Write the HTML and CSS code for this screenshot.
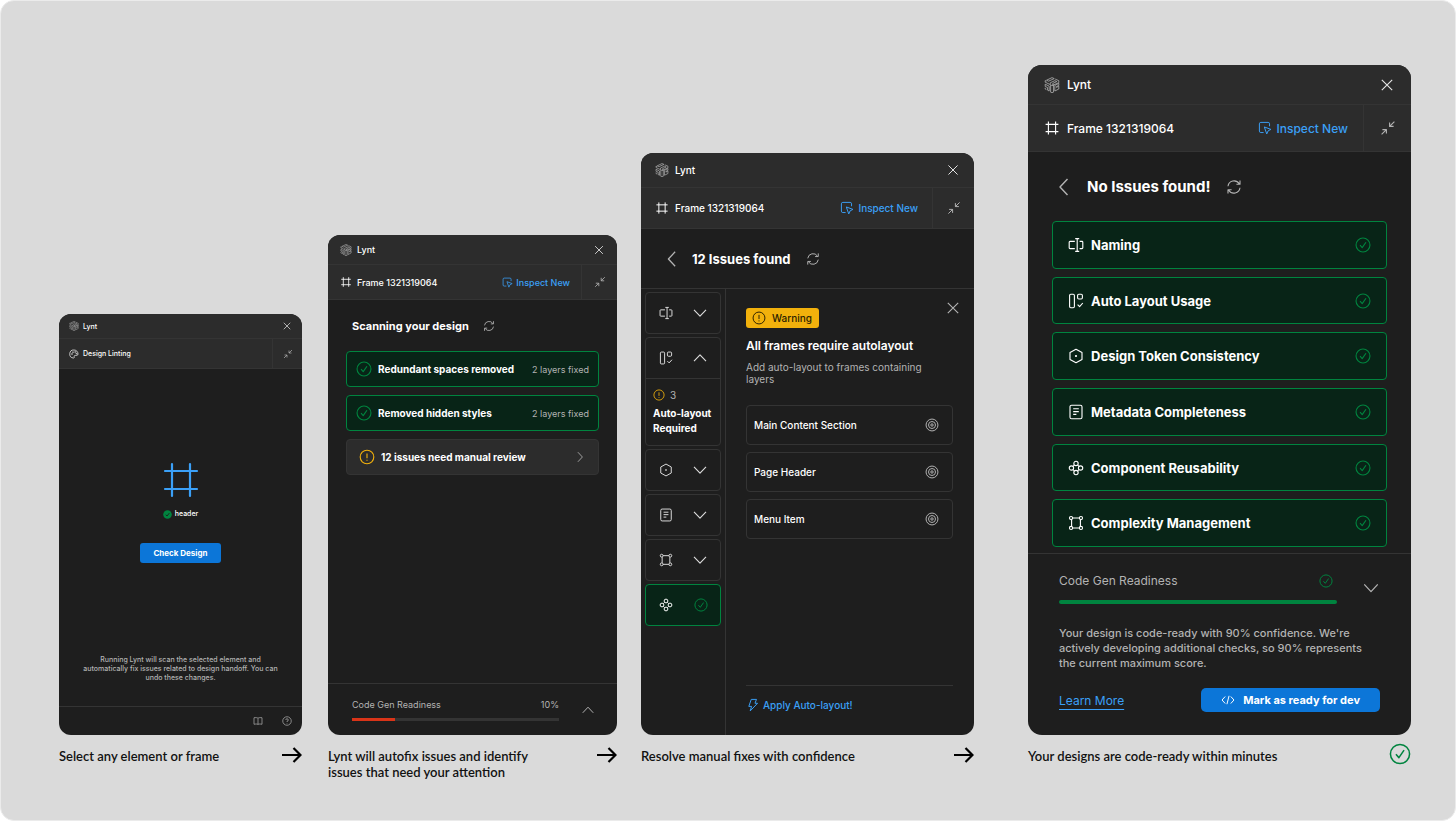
FILE: index.html
```html
<!DOCTYPE html>
<html lang="en">
<head>
<meta charset="utf-8">
<meta name="viewport" content="width=device-width, initial-scale=1">
<title>Lynt</title>
<link rel="stylesheet" href="styles.css">
</head>
<body>
<svg class="sprite" aria-hidden="true">
  <symbol id="i-logo" viewBox="0 0 20 20"><path d="M10 .8 12.800 2 5.800 5.200 3.200 4Z M14 2.600 18.500 4.600V7L11 10.400V8L16 5.700 13.500 4.600 7.800 7.200 7.800 9.500 1.500 6.500V4.500L3 5.200 M1.500 9 6.500 11.500V17.500L4.500 16.500V13.200L1.500 11.800Z M8.300 9.800 10 10.800 11.800 9.800V19L10 19.700 8.300 19Z M13.500 10.500 18.500 8V10.500L15.500 12V13L18.500 11.500V15L13.500 17.500Z M1.500 13.500V15L3 15.800"/></symbol>
  <symbol id="i-x" viewBox="0 0 20 20"><path d="M3.500 3.500 16.500 16.500M16.500 3.500 3.500 16.500"/></symbol>
  <symbol id="i-frame" viewBox="0 0 20 20"><path d="M5.500 2V18M14.500 2V18M2 5.500H18M2 14.500H18"/></symbol>
  <symbol id="i-palette" viewBox="0 0 20 20"><path d="M10 2a8 8 0 1 0-1 16c1.500 0 2-1 1.500-2.300-.6-1.500.2-2.900 2-2.900H15.500c1.700 0 2.500-1.200 2.500-2.800C18 5.300 14.400 2 10 2Z"/><circle cx="6" cy="10" r=".8"/><circle cx="8" cy="6.300" r=".8"/><circle cx="12.300" cy="6" r=".8"/><circle cx="14.800" cy="9.300" r=".8"/></symbol>
  <symbol id="i-collapse" viewBox="0 0 20 20"><path d="M18 2 12 8M12 3V8H17M2 18 8 12M3 12H8V17"/></symbol>
  <symbol id="i-inspect" viewBox="0 0 20 20"><path d="M8 16.500H4A2 2 0 0 1 2 14.500V4A2 2 0 0 1 4 2H14.500A2 2 0 0 1 16.500 4V7.500M9 8.500 18.500 12 14.500 14 12.500 18.500Z"/></symbol>
  <symbol id="i-refresh" viewBox="0 0 20 20"><path d="M2.500 9A7.600 7.600 0 0 1 16.500 6M17.500 2V6.500H13M17.500 11A7.600 7.600 0 0 1 3.500 14M2.500 18V13.500H7"/></symbol>
  <symbol id="i-check" viewBox="0 0 20 20"><circle cx="10" cy="10" r="8.700"/><path d="M6.300 10.300 9 13.300 13.700 6.500"/></symbol>
  <symbol id="i-warn" viewBox="0 0 20 20"><circle cx="10" cy="10" r="8.500"/><path d="M10 5.500V11.500M10 13.500V14.800"/></symbol>
  <symbol id="i-down" viewBox="0 0 20 20"><path d="M2.500 6 10 14 17.500 6"/></symbol>
  <symbol id="i-up" viewBox="0 0 20 20"><path d="M2.500 14 10 6 17.500 14"/></symbol>
  <symbol id="i-left" viewBox="0 0 20 20"><path d="M13.500 2 6 10 13.500 18"/></symbol>
  <symbol id="i-right" viewBox="0 0 20 20"><path d="M6.500 2 14 10 6.500 18"/></symbol>
  <symbol id="i-naming" viewBox="0 0 20 20"><path d="M8.500 5.500H2.500A1 1 0 0 0 1.500 6.500V13.500A1 1 0 0 0 2.500 14.500H8.500M14.500 5.500H17.500A1 1 0 0 1 18.500 6.500V13.500A1 1 0 0 1 17.500 14.500H14.500M11.500 2V18M9 2H14M9 18H14"/></symbol>
  <symbol id="i-layout" viewBox="0 0 20 20"><rect x="2" y="1.500" width="6" height="17" rx="1.500"/><rect x="12" y="1.500" width="6" height="6" rx="1.500"/><path d="M12 14.500 14.500 17 18.500 12.500"/></symbol>
  <symbol id="i-token" viewBox="0 0 20 20"><path d="M10 1.500 17.500 5.700V14.300L10 18.500 2.500 14.300V5.700Z"/><circle cx="10" cy="10" r=".7"/></symbol>
  <symbol id="i-meta" viewBox="0 0 20 20"><rect x="2.500" y="1.500" width="15" height="17" rx="2"/><path d="M6.500 6H13.500M6.500 9.500H13.500M6.500 13H10.500"/></symbol>
  <symbol id="i-comp" viewBox="0 0 20 20"><circle cx="10" cy="4.300" r="2.700"/><circle cx="10" cy="15.700" r="2.700"/><circle cx="4.300" cy="10" r="2.700"/><circle cx="15.700" cy="10" r="2.700"/><path d="M8 6.300 6.200 8M12 6.300 13.800 8M8 13.700 6.200 12M12 13.700 13.800 12"/></symbol>
  <symbol id="i-complex" viewBox="0 0 20 20"><circle cx="3.800" cy="3.800" r="2"/><circle cx="16.200" cy="3.800" r="2"/><circle cx="3.800" cy="16.200" r="2"/><circle cx="16.200" cy="16.200" r="2"/><path d="M5.800 3.800H14.200M5.800 16.200H14.200M4.500 5.800V14.200M15.500 5.800V14.200"/></symbol>
  <symbol id="i-target" viewBox="0 0 20 20"><circle cx="10" cy="10" r="8.500"/><circle cx="10" cy="10" r="5"/><circle cx="10" cy="10" r="1.700"/></symbol>
  <symbol id="i-bolt" viewBox="0 0 20 20"><path d="M7.500 2H15L12.800 7.500H16.500L6 18.500 8 12H4Z"/></symbol>
  <symbol id="i-book" viewBox="0 0 20 20"><path d="M10 4.500V17M10 4.500C8.500 3 5 3 2 3.500V16.500C5 16 8.500 15.500 10 17 11.500 15.500 15 16 18 16.500V3.500C15 3 11.500 3 10 4.500Z"/></symbol>
  <symbol id="i-help" viewBox="0 0 20 20"><circle cx="10" cy="10" r="8.500"/><path d="M7.500 8A2.500 2.500 0 1 1 10 10.500V12M10 14V15"/></symbol>
  <symbol id="i-code" viewBox="0 0 20 20"><path d="M6 5 1.500 10 6 15M14 5 18.500 10 14 15M11.500 4 8.500 16"/></symbol>
  <symbol id="i-arrow" viewBox="0 0 20 16"><path d="M0 8H18.500M11.500 1 18.500 8 11.500 15"/></symbol>
</svg>

<main class="board">
  <section class="step step-select">
    <article class="panel">
      <header class="bar brand">
        <svg class="icon logo"><use href="#i-logo"/></svg><span class="name">Lynt</span>
        <button class="bare close" aria-label="Close"><svg class="icon"><use href="#i-x"/></svg></button>
      </header>
      <div class="bar context">
        <svg class="icon"><use href="#i-palette"/></svg><span class="name">Design Linting</span>
        <button class="bare collapse" aria-label="Collapse"><svg class="icon"><use href="#i-collapse"/></svg></button>
      </div>
      <div class="picked">
        <svg class="icon big-frame"><use href="#i-frame"/></svg>
        <p class="picked-name"><svg class="dot" viewBox="0 0 20 20"><circle class="dot-fill" cx="10" cy="10" r="9.500"/><path class="dot-tick" d="M6 10.500 9 13.300 14 7"/></svg>header</p>
        <button class="primary check-design">Check Design</button>
      </div>
      <p class="hint">Running Lynt will scan the selected element and automatically fix issues related to design handoff. You can undo these changes.</p>
      <footer class="tools">
        <button class="bare" aria-label="Documentation"><svg class="icon"><use href="#i-book"/></svg></button>
        <button class="bare" aria-label="Help"><svg class="icon"><use href="#i-help"/></svg></button>
      </footer>
    </article>
    <div class="caption"><p>Select any element or frame</p><svg class="arrow"><use href="#i-arrow"/></svg></div>
  </section>

  <section class="step step-scan">
    <article class="panel">
      <header class="bar brand">
        <svg class="icon logo"><use href="#i-logo"/></svg><span class="name">Lynt</span>
        <button class="bare close" aria-label="Close"><svg class="icon"><use href="#i-x"/></svg></button>
      </header>
      <div class="bar context">
        <svg class="icon"><use href="#i-frame"/></svg><span class="name">Frame 1321319064</span>
        <button class="bare inspect"><svg class="icon"><use href="#i-inspect"/></svg>Inspect New</button>
        <button class="bare collapse" aria-label="Collapse"><svg class="icon"><use href="#i-collapse"/></svg></button>
      </div>
      <div class="heading">
        <h2>Scanning your design</h2>
        <button class="bare" aria-label="Rescan"><svg class="icon"><use href="#i-refresh"/></svg></button>
      </div>
      <ul class="results">
        <li class="card good"><svg class="icon status"><use href="#i-check"/></svg><strong>Redundant spaces removed</strong><span class="note">2 layers fixed</span></li>
        <li class="card good"><svg class="icon status"><use href="#i-check"/></svg><strong>Removed hidden styles</strong><span class="note">2 layers fixed</span></li>
        <li><button class="card review"><svg class="icon status"><use href="#i-warn"/></svg><strong>12 issues need manual review</strong><svg class="icon go"><use href="#i-right"/></svg></button></li>
      </ul>
      <footer class="readiness">
        <div class="meter">
          <div class="meter-row"><span id="ready-scan">Code Gen Readiness</span><span class="value">10%</span></div>
          <div class="track" role="progressbar" aria-labelledby="ready-scan" aria-valuenow="10"><div class="fill" style="width:21%"></div></div>
        </div>
        <button class="bare toggle" aria-label="Expand"><svg class="icon"><use href="#i-up"/></svg></button>
      </footer>
    </article>
    <div class="caption"><p>Lynt will autofix issues and identify issues that need your attention</p><svg class="arrow"><use href="#i-arrow"/></svg></div>
  </section>

  <section class="step step-resolve">
    <article class="panel">
      <header class="bar brand">
        <svg class="icon logo"><use href="#i-logo"/></svg><span class="name">Lynt</span>
        <button class="bare close" aria-label="Close"><svg class="icon"><use href="#i-x"/></svg></button>
      </header>
      <div class="bar context">
        <svg class="icon"><use href="#i-frame"/></svg><span class="name">Frame 1321319064</span>
        <button class="bare inspect"><svg class="icon"><use href="#i-inspect"/></svg>Inspect New</button>
        <button class="bare collapse" aria-label="Collapse"><svg class="icon"><use href="#i-collapse"/></svg></button>
      </div>
      <div class="heading">
        <button class="bare back" aria-label="Back"><svg class="icon"><use href="#i-left"/></svg></button>
        <h2>12 Issues found</h2>
        <button class="bare" aria-label="Rescan"><svg class="icon"><use href="#i-refresh"/></svg></button>
      </div>
      <div class="workspace">
        <nav class="rail">
          <button class="tile" aria-label="Naming"><svg class="icon"><use href="#i-naming"/></svg><svg class="icon chev"><use href="#i-down"/></svg></button>
          <div class="tile-group">
            <button class="tile" aria-label="Auto layout usage"><svg class="icon"><use href="#i-layout"/></svg><svg class="icon chev"><use href="#i-up"/></svg></button>
            <div class="tile-detail">
              <p class="count"><svg class="icon"><use href="#i-warn"/></svg>3</p>
              <strong>Auto-layout Required</strong>
            </div>
          </div>
          <button class="tile" aria-label="Design token consistency"><svg class="icon"><use href="#i-token"/></svg><svg class="icon chev"><use href="#i-down"/></svg></button>
          <button class="tile" aria-label="Metadata completeness"><svg class="icon"><use href="#i-meta"/></svg><svg class="icon chev"><use href="#i-down"/></svg></button>
          <button class="tile" aria-label="Complexity management"><svg class="icon"><use href="#i-complex"/></svg><svg class="icon chev"><use href="#i-down"/></svg></button>
          <button class="tile good" aria-label="Component reusability"><svg class="icon"><use href="#i-comp"/></svg><svg class="icon status"><use href="#i-check"/></svg></button>
        </nav>
        <div class="issue">
          <div class="issue-top">
            <span class="badge"><svg class="icon"><use href="#i-warn"/></svg>Warning</span>
            <button class="bare" aria-label="Close issue"><svg class="icon"><use href="#i-x"/></svg></button>
          </div>
          <h3>All frames require autolayout</h3>
          <p class="desc">Add auto-layout to frames containing layers</p>
          <ul class="layers">
            <li>Main Content Section<button class="bare" aria-label="Locate Main Content Section"><svg class="icon"><use href="#i-target"/></svg></button></li>
            <li>Page Header<button class="bare" aria-label="Locate Page Header"><svg class="icon"><use href="#i-target"/></svg></button></li>
            <li>Menu Item<button class="bare" aria-label="Locate Menu Item"><svg class="icon"><use href="#i-target"/></svg></button></li>
          </ul>
          <div class="apply"><button class="bare"><svg class="icon"><use href="#i-bolt"/></svg>Apply Auto-layout!</button></div>
        </div>
      </div>
    </article>
    <div class="caption"><p>Resolve manual fixes with confidence</p><svg class="arrow"><use href="#i-arrow"/></svg></div>
  </section>

  <section class="step step-ready">
    <article class="panel">
      <header class="bar brand">
        <svg class="icon logo"><use href="#i-logo"/></svg><span class="name">Lynt</span>
        <button class="bare close" aria-label="Close"><svg class="icon"><use href="#i-x"/></svg></button>
      </header>
      <div class="bar context">
        <svg class="icon"><use href="#i-frame"/></svg><span class="name">Frame 1321319064</span>
        <button class="bare inspect"><svg class="icon"><use href="#i-inspect"/></svg>Inspect New</button>
        <button class="bare collapse" aria-label="Collapse"><svg class="icon"><use href="#i-collapse"/></svg></button>
      </div>
      <div class="heading">
        <button class="bare back" aria-label="Back"><svg class="icon"><use href="#i-left"/></svg></button>
        <h2>No Issues found!</h2>
        <button class="bare" aria-label="Rescan"><svg class="icon"><use href="#i-refresh"/></svg></button>
      </div>
      <ul class="results">
        <li class="card good"><svg class="icon"><use href="#i-naming"/></svg><strong>Naming</strong><svg class="icon status"><use href="#i-check"/></svg></li>
        <li class="card good"><svg class="icon"><use href="#i-layout"/></svg><strong>Auto Layout Usage</strong><svg class="icon status"><use href="#i-check"/></svg></li>
        <li class="card good"><svg class="icon"><use href="#i-token"/></svg><strong>Design Token Consistency</strong><svg class="icon status"><use href="#i-check"/></svg></li>
        <li class="card good"><svg class="icon"><use href="#i-meta"/></svg><strong>Metadata Completeness</strong><svg class="icon status"><use href="#i-check"/></svg></li>
        <li class="card good"><svg class="icon"><use href="#i-comp"/></svg><strong>Component Reusability</strong><svg class="icon status"><use href="#i-check"/></svg></li>
        <li class="card good"><svg class="icon"><use href="#i-complex"/></svg><strong>Complexity Management</strong><svg class="icon status"><use href="#i-check"/></svg></li>
      </ul>
      <footer class="summary">
        <div class="readiness">
          <div class="meter">
            <div class="meter-row"><span id="ready-done">Code Gen Readiness</span><svg class="icon status"><use href="#i-check"/></svg></div>
            <div class="track" role="progressbar" aria-labelledby="ready-done" aria-valuenow="100"><div class="fill" style="width:100%"></div></div>
          </div>
          <button class="bare toggle" aria-label="Collapse summary"><svg class="icon"><use href="#i-down"/></svg></button>
        </div>
        <p class="message">Your design is code-ready with 90% confidence. We're actively developing additional checks, so 90% represents the current maximum score.</p>
        <div class="actions">
          <a href="#learn">Learn More</a>
          <button class="primary"><svg class="icon"><use href="#i-code"/></svg>Mark as ready for dev</button>
        </div>
      </footer>
    </article>
    <div class="caption"><p>Your designs are code-ready within minutes</p><svg class="icon done"><use href="#i-check"/></svg></div>
  </section>
</main>
</body>
</html>
```
FILE: styles.css
```css
:root {
  --surface: #1e1e1e;
  --raised: #2c2c2c;
  --line: #343434;
  --text: #ffffff;
  --muted: #b3b3b3;
  --blue: #3ba0f7;
  --primary: #0c76d8;
  --green: #00843f;
  --green-bg: #082417;
  --amber: #f2b10c;
}

* { box-sizing: border-box; }

body {
  margin: 0;
  background: #ffffff;
  font-family: Inter, "Liberation Sans", sans-serif;
}

h2, h3, p, ul { margin: 0; padding: 0; }
ul { list-style: none; }
button { font: inherit; color: inherit; cursor: pointer; }
.sprite { display: none; }

.board {
  display: flex;
  min-height: 100vh;
  padding: 64px 44px 0 58px;
  background: #dadada;
  border: 1px solid #ebebeb;
  border-radius: 14px;
}

.step {
  display: flex;
  flex-direction: column;
  min-width: 0;
  padding-bottom: 33px;
}
.step-select { flex: 243 1 0; margin-right: 26px; }
.step-scan { flex: 289 1 0; margin-right: 24px; }
.step-resolve { flex: 333 1 0; margin-right: 54px; }
.step-ready { flex: 383 1 0; }

.caption {
  display: flex;
  align-items: flex-start;
  justify-content: space-between;
  min-height: 52px;
  padding-top: 8px;
  font-family: Lato, Inter, sans-serif;
  font-size: 13px;
  line-height: 16px;
  font-weight: 600;
  color: #111111;
}
.caption p { max-width: 276px; padding-top: 5px; }
.step-scan .caption p { max-width: 220px; }
.arrow {
  flex: none;
  width: 20px;
  height: 16px;
  margin-top: 4px;
  fill: none;
  stroke: #000000;
  stroke-width: 2.2;
}
.done {
  --icon: 22px;
  color: var(--green);
}

.panel {
  display: flex;
  flex-direction: column;
  margin-top: auto;
  overflow: hidden;
  background: var(--surface);
  border-radius: 12px;
  color: var(--text);
  font-size: var(--fs);
}
.step-select .panel { --fs: 7px; --icon: 10px; --side: 10px; --gap: 4px; --top: 25px; --sub: 30px; --end: 30px; min-height: 421px; }
.step-scan .panel { --fs: 9px; --icon: 12px; --side: 12px; --gap: 5px; --top: 30px; --sub: 35px; --end: 36px; min-height: 500px; }
.step-resolve .panel { --fs: 10px; --icon: 14px; --side: 14px; --gap: 6px; --top: 35px; --sub: 41px; --end: 42px; min-height: 582px; }
.step-ready .panel { --fs: 12px; --icon: 16px; --side: 16px; --gap: 7px; --top: 40px; --sub: 47px; --end: 48px; min-height: 670px; border-radius: 14px; }

.icon {
  flex: none;
  display: block;
  width: var(--icon);
  height: var(--icon);
  fill: none;
  stroke: currentColor;
  stroke-width: 1.4;
  stroke-linejoin: round;
}
.logo { stroke-width: 1; color: var(--muted); }

.bare {
  display: flex;
  align-items: center;
  padding: 0;
  background: none;
  border: 0;
  color: var(--muted);
}

.bar {
  display: flex;
  align-items: center;
  flex: none;
  gap: var(--gap);
  padding-left: var(--side);
  background: var(--raised);
  border-bottom: 1px solid var(--line);
  font-weight: 500;
}
.brand { height: var(--top); }
.context { height: var(--sub); }
.name { margin-right: auto; }
.close {
  justify-content: center;
  width: var(--end);
  color: #e6e6e6;
}
.collapse {
  justify-content: center;
  align-self: stretch;
  width: var(--end);
  border-left: 1px solid var(--line);
}
.inspect { --icon: 14px; gap: 4px; margin-right: 8px; color: var(--blue); font-weight: 500; }
.step-scan .inspect { --icon: 11px; gap: 3px; margin-right: 6px; }

.primary {
  display: flex;
  align-items: center;
  justify-content: center;
  background: var(--primary);
  border: 0;
  color: #ffffff;
  font-weight: 600;
}

.card {
  display: flex;
  align-items: center;
  width: 100%;
  border: 1px solid var(--line);
  border-radius: 4px;
}
.good { background: var(--green-bg); border-color: var(--green); }
.good .status { color: var(--green); }
.card strong { font-weight: 700; }

/* Select */
.picked {
  display: flex;
  flex-direction: column;
  align-items: center;
  padding-top: 91px;
}
.big-frame { --icon: 40px; color: var(--blue); stroke-width: 1.1; stroke-linecap: round; }
.picked-name {
  display: flex;
  align-items: center;
  gap: 3px;
  margin-top: 9px;
  line-height: 10px;
  font-weight: 500;
}
.dot { width: 9px; height: 9px; }
.dot-fill { fill: var(--green); }
.dot-tick { fill: none; stroke: var(--surface); stroke-width: 2; }
.check-design {
  height: 20px;
  margin-top: 24px;
  padding: 0 13px;
  border-radius: 3px;
  font-size: 8px;
  font-weight: 700;
}
.hint {
  margin: auto 20px 24px;
  color: var(--muted);
  font-size: 7px;
  font-weight: 500;
  line-height: 9px;
  text-align: center;
}
.tools {
  display: flex;
  justify-content: flex-end;
  gap: 19px;
  height: 29px;
  padding-right: 10px;
  border-top: 1px solid var(--line);
}

/* Scan */
.heading {
  display: flex;
  align-items: center;
  flex: none;
}
.heading h2 { font-weight: 700; }
.step-scan .heading { gap: 14px; height: 51px; padding-left: 24px; }
.step-scan h2 { font-size: 11px; }
.step-scan .results {
  display: flex;
  flex-direction: column;
  gap: 8px;
  margin: 0 18px;
}
.step-scan .card { height: 36px; padding: 0 9px; gap: 6px; white-space: nowrap; }
.step-scan .card .status { --icon: 16px; }
.step-scan .card strong { font-size: 10px; margin-right: auto; }
.note { color: var(--muted); }
.step-scan .review { padding: 0 12px; gap: 6px; background: var(--raised); text-align: left; }
.step-scan .review .status { color: var(--amber); }
.go { color: var(--muted); }

.readiness { display: flex; align-items: center; }
.readiness .status { --icon: 14px; color: var(--green); }
.meter { flex: 1; }
.meter-row { display: flex; align-items: center; justify-content: space-between; color: var(--muted); }
.track { overflow: hidden; border-radius: 2px; background: var(--line); }
.fill { height: 100%; background: var(--green); }
.step-scan .readiness {
  gap: 22px;
  height: 52px;
  margin-top: auto;
  padding: 0 22px 0 24px;
  border-top: 1px solid var(--line);
}
.step-scan .toggle { --icon: 14px; }
.step-scan .track { height: 3px; margin-top: 8px; border-radius: 0; }
.step-scan .fill { background: #d93418; }

/* Resolve */
.step-resolve .heading {
  height: 60px;
  padding-left: 22px;
  border-bottom: 1px solid var(--line);
}
.back { --icon: 18px; }
.step-resolve h2 { margin: 0 15px 0 11px; font-size: 13px; }
.workspace { display: flex; flex: 1; }
.rail {
  display: flex;
  flex-direction: column;
  flex: none;
  gap: 3px;
  width: 85px;
  padding: 3px 4px;
  border-right: 1px solid var(--line);
}
.tile {
  display: flex;
  align-items: center;
  justify-content: space-between;
  width: 100%;
  height: 42px;
  padding: 0 12px 0 13px;
  background: none;
  border: 1px solid var(--line);
  border-radius: 4px;
  color: #dddddd;
}
.tile.good { background: var(--green-bg); border-color: var(--green); color: #ffffff; }
.chev { --icon: 16px; }
.tile-group { border: 1px solid var(--line); border-radius: 4px; }
.tile-group .tile { height: 41px; border-width: 0 0 1px; border-radius: 0; }
.tile-detail { padding: 9px 7px; font-size: 10px; line-height: 15px; }
.tile-detail strong { display: block; font-weight: 700; }
.count { display: flex; align-items: center; gap: 5px; line-height: 14px; margin-bottom: 4px; color: var(--muted); }
.count .icon { --icon: 12px; color: var(--amber); }
.issue {
  display: flex;
  flex-direction: column;
  flex: 1;
  min-width: 0;
  padding: 19px 21px 23px 20px;
}
.issue-top { display: flex; align-items: flex-start; justify-content: space-between; }
.issue-top .bare { height: 0; margin-right: -8px; }
.issue-top .bare .icon { --icon: 16px; }
.badge {
  display: flex;
  align-items: center;
  gap: 6px;
  height: 20px;
  padding: 0 7px 0 6px;
  background: var(--amber);
  border-radius: 3px;
  color: #2b2100;
  font-size: 10px;
  font-weight: 500;
}
.issue h3 { margin-top: 10px; font-size: 12px; line-height: 16px; font-weight: 600; }
.desc { max-width: 190px; margin-top: 7px; color: var(--muted); font-size: 10px; line-height: 12px; }
.layers { display: flex; flex-direction: column; gap: 7px; margin-top: 20px; }
.layers li {
  display: flex;
  align-items: center;
  justify-content: space-between;
  height: 40px;
  padding: 0 13px 0 7px;
  border: 1px solid var(--line);
  border-radius: 4px;
  font-size: 10px;
  font-weight: 500;
}
.apply { margin-top: auto; padding-top: 12px; border-top: 1px solid var(--line); }
.apply .bare { gap: 3px; color: var(--blue); font-weight: 500; }

/* Ready */
.step-ready .heading { --icon: 16px; height: 69px; padding-left: 26px; }
.step-ready .back { --icon: 20px; }
.step-ready h2 { margin: 0 16px 0 13px; font-size: 15px; }
.step-ready .results {
  display: flex;
  flex: 1;
  flex-direction: column;
  gap: 8px;
  margin: 0 24px 6px;
}
.step-ready .card { flex: 1; gap: 7px; padding: 0 15px; }
.step-ready .card strong { margin-right: auto; font-size: 13px; }
.summary { padding: 17px 31px 23px; border-top: 1px solid var(--line); }
.step-ready .readiness { gap: 25px; }
.step-ready .toggle { --icon: 18px; }
.step-ready .meter-row { padding-right: 4px; line-height: 20px; }
.step-ready .track { height: 4px; margin-top: 9px; }
.message { margin-top: 22px; color: var(--muted); font-size: 11px; font-weight: 500; line-height: 15px; }
.actions { display: flex; align-items: center; justify-content: space-between; margin-top: 17px; }
.actions a { color: var(--blue); text-decoration: underline; text-underline-offset: 4px; }
.actions .primary { --icon: 14px; gap: 8px; height: 24px; padding: 0 20px; border-radius: 5px; font-size: 11px; font-weight: 700; }
```
